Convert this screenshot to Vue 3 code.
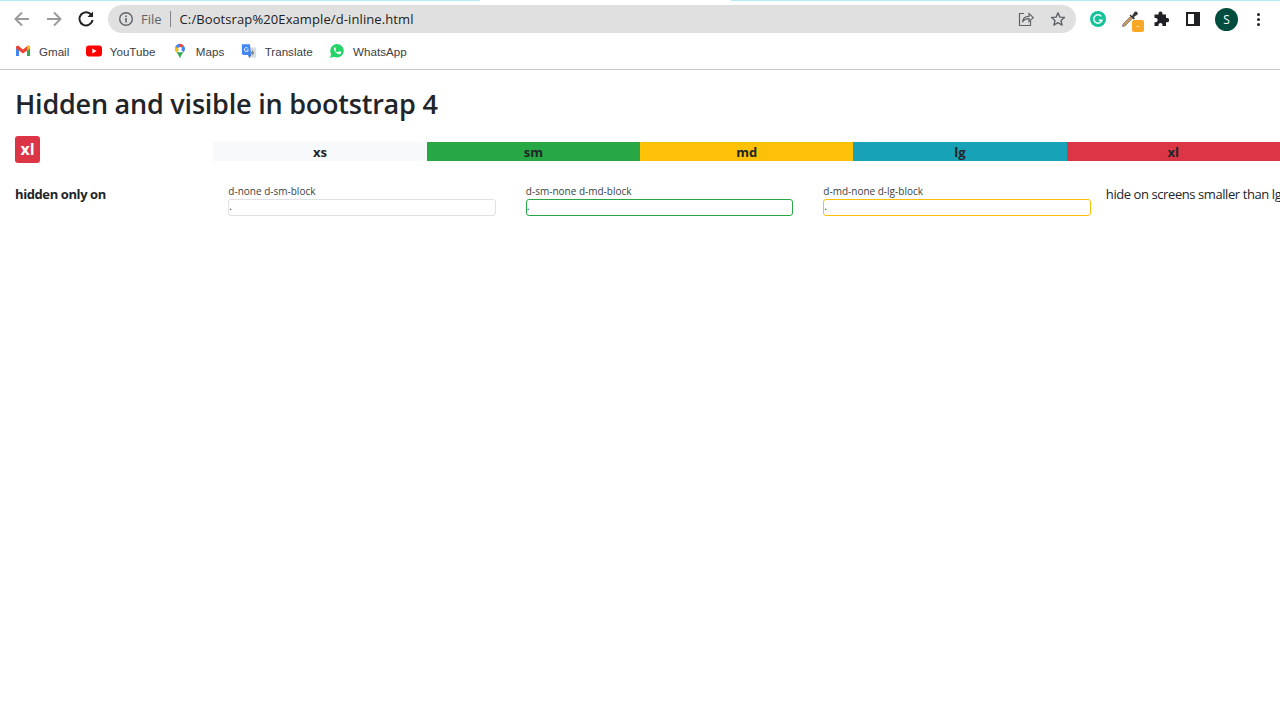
<script setup>
const marcadores = [
  { nombre: 'Gmail', icono: 'gmail' },
  { nombre: 'YouTube', icono: 'youtube' },
  { nombre: 'Maps', icono: 'maps' },
  { nombre: 'Translate', icono: 'translate' },
  { nombre: 'WhatsApp', icono: 'whatsapp' }
]

const tamanos = [
  { txt: 'xs', clase: 'bg-light' },
  { txt: 'sm', clase: 'bg-success' },
  { txt: 'md', clase: 'bg-warning' },
  { txt: 'lg', clase: 'bg-info' },
  { txt: 'xl', clase: 'bg-danger' }
]

const cajas = [
  { txt: 'd-none d-sm-block', clase: 'borde-gris' },
  { txt: 'd-sm-none d-md-block', clase: 'borde-verde' },
  { txt: 'd-md-none d-lg-block', clase: 'borde-amarillo' }
]
</script>

<template>
  <div class="pagina">
    <header class="navegador">
      <div class="franja">
        <span class="franja-a"></span>
        <span class="franja-b"></span>
      </div>
      <div class="barra">
        <svg class="flecha" width="18" height="18" viewBox="0 0 18 18"><path d="M16 9H3M9 2.500 2.500 9 9 15.500" fill="none" stroke="#9b9b9b" stroke-width="2"/></svg>
        <svg class="flecha dos" width="18" height="18" viewBox="0 0 18 18"><path d="M2 9h13M9 2.500 15.500 9 9 15.500" fill="none" stroke="#9b9b9b" stroke-width="2"/></svg>
        <svg class="recargar" width="18" height="18" viewBox="0 0 18 18"><path d="M14.600 5.200A6.600 6.600 0 1 0 15.600 10" fill="none" stroke="#222" stroke-width="2"/><path d="M16 1.500V7h-5.500z" fill="#222"/></svg>
        <div class="url">
          <svg width="16" height="16" viewBox="0 0 16 16"><circle cx="8" cy="8" r="6.300" fill="none" stroke="#5f6368" stroke-width="1.400"/><path d="M7.200 7h1.600v4.600H7.200zM7.200 4.400h1.600V6H7.200z" fill="#5f6368"/></svg>
          <span class="file">File</span>
          <span class="sep"></span>
          <span class="direccion">C:/Bootsrap%20Example/d-inline.html</span>
          <svg class="compartir" width="16" height="16" viewBox="0 0 16 16"><path d="M6 2.500H1.500v12h11V10" fill="none" stroke="#5f6368" stroke-width="1.200"/><path d="M4.500 11c.4-3.600 3-5.600 6.500-5.600V2.600L15.300 6.600 11 10.500V7.600C8.400 7.600 6 8.600 4.500 11z" fill="#e0e0e0" stroke="#5f6368" stroke-width="1.200"/></svg>
          <svg class="estrella" width="16" height="16" viewBox="0 0 16 16"><path d="M8 1.800l1.900 4.300 4.600.4-3.500 3 1.100 4.600L8 11.700l-4.100 2.400L5 9.500l-3.500-3 4.600-.4z" fill="none" stroke="#5f6368" stroke-width="1.400" stroke-linejoin="round"/></svg>
        </div>
        <div class="extensiones">
          <span class="grammarly">
            <svg width="16" height="16" viewBox="0 0 16 16"><circle cx="8" cy="8" r="8" fill="#15c39a"/><path d="M11.300 5.400A4.200 4.200 0 1 0 12 9.200H8.800" fill="none" stroke="#fff" stroke-width="1.500"/></svg>
          </span>
          <span class="gotero">
            <svg width="18" height="18" viewBox="0 0 18 18"><path d="M1.500 16.500 2 14 9.500 6.500 11.500 8.500 4 16z" fill="#c99a5b" stroke="#8f8f8f" stroke-width="1"/><path d="M9.500 4.500 11 6l2.300-3.800a1.700 1.700 0 0 1 3 2.600L12.800 7l1.200 1.500-1.200 1L8.500 5.500z" fill="#37393c"/></svg>
            <span class="insignia">-</span>
          </span>
          <svg class="puzzle" width="16" height="16" viewBox="0 0 16 16"><path d="M5.500 2.500a2 2 0 0 1 4 0V3.500H13V7h1a2.100 2.100 0 0 1 0 4.300h-1V15H9.500v-1a2 2 0 0 0-4 0v1H1.500v-3.700h1a2.200 2.200 0 0 0 0-4.400h-1V3.500h4z" fill="#202124"/></svg>
          <span class="panel-lateral"></span>
          <span class="avatar">S</span>
          <span class="puntos"><i></i><i></i><i></i></span>
        </div>
      </div>
      <nav class="marcadores">
        <a v-for="m in marcadores" :key="m.nombre" class="marcador">
          <svg v-if="m.icono === 'gmail'" width="16" height="16" viewBox="0 0 16 16"><path d="M1 4v9h3V7z" fill="#4285f4"/><path d="M12 7v6h3V4z" fill="#34a853"/><path d="M1 3.500v2L8 10.500l7-5v-2L13 2.500 8 6.500 3 2.500z" fill="#ea4335"/><path d="M13 2.500l2 1v2l-3 2.200V4z" fill="#fbbc04"/></svg>
          <svg v-else-if="m.icono === 'youtube'" width="16" height="16" viewBox="0 0 16 16"><rect x="0" y="2.500" width="16" height="11" rx="3" fill="#f00"/><path d="M6.300 5.500v5L10.600 8z" fill="#fff"/></svg>
          <svg v-else-if="m.icono === 'maps'" width="16" height="16" viewBox="0 0 16 16"><path d="M8 .8a5 5 0 0 0-5 5c0 1.300.6 2.400 1.400 3.400L8 6z" fill="#4285f4"/><path d="M8 .8a5 5 0 0 1 3.600 1.600L8 6z" fill="#ea4335"/><path d="M3.500 3.400 8 6 4.400 9.200A5 5 0 0 1 3 5.800a5 5 0 0 1 .5-2.400z" fill="#fbbc04"/><path d="M11.600 2.400A5 5 0 0 1 13 5.800c0 1.300-.6 2.300-1.400 3.400L8 6z" fill="#4285f4"/><path d="M4.400 9.200 11.600 9.200C10 11 8.800 12.800 8 15.400 7.400 13 6 11 4.400 9.200z" fill="#34a853"/><circle cx="8" cy="5.800" r="1.800" fill="#fff"/></svg>
          <svg v-else-if="m.icono === 'translate'" width="16" height="16" viewBox="0 0 18 18"><path d="M9 5h8v11.500H8z" fill="#dadce0"/><path d="M13 7.500l.9 2.500h1l-1.400 3.600h-1L11 10h1z" fill="#80868b"/><path d="M1 1.500h9l1.500 12H3a2 2 0 0 1-2-2z" fill="#4285f4"/><path d="M8 13.500h3.500L9.500 16.500z" fill="#3367d6"/><path d="M8 6.200A2.300 2.300 0 1 0 8.300 8H6.200" fill="none" stroke="#fff" stroke-width="1"/></svg>
          <svg v-else width="16" height="16" viewBox="0 0 16 16"><circle cx="8" cy="7.800" r="6.800" fill="#25d366"/><path d="M1 15l1.200-4.300 3 3z" fill="#25d366"/><path d="M5.800 4.200c-.9.700-1.200 1.700-.6 3 .8 1.800 2 3 3.800 3.800 1.300.5 2.300.2 3-.7l.2-1.200-1.900-1-.9 1C8 9.600 6.800 8.400 6.300 7.200l.8-.9-.9-2z" fill="#fff"/></svg>
          <span>{{ m.nombre }}</span>
        </a>
      </nav>
    </header>

    <main class="contenido">
      <h1>Hidden and visible in bootstrap 4</h1>

      <div class="fila-tamanos">
        <div class="col-badge"><span class="badge">xl</span></div>
        <div v-for="t in tamanos" :key="t.txt" class="tamano" :class="t.clase">{{ t.txt }}</div>
      </div>

      <div class="fila-cajas">
        <strong class="col-titulo">hidden only on</strong>
        <div class="cajas">
          <div v-for="c in cajas" :key="c.txt" class="caja">
            <small>{{ c.txt }}</small>
            <div class="borde" :class="c.clase">.</div>
          </div>
        </div>
        <p class="nota">hide on screens smaller than lg</p>
      </div>
    </main>
  </div>
</template>

<style scoped>
* {
  box-sizing: border-box;
}

.pagina {
  width: 1280px;
  height: 727px;
  overflow: hidden;
  background: #fff;
  color: #212529;
  font-family: "Open Sans", "Noto Sans", sans-serif;
}

.navegador {
  height: 70px;
  border-bottom: 1px solid #c8c8c8;
  position: relative;
}

.franja {
  position: absolute;
  top: 0;
  left: 0;
  right: 0;
  height: 1px;
}

.franja-a,
.franja-b {
  position: absolute;
  top: 0;
  height: 1px;
  background: #b3ecf5;
}

.franja-a {
  left: 0;
  width: 480px;
}

.franja-b {
  left: 731px;
  right: 0;
}

.barra {
  height: 38px;
  display: flex;
  align-items: center;
  padding-left: 13px;
}

.flecha.dos {
  margin-left: 14px;
}

.recargar {
  margin-left: 14px;
}

.url {
  margin-left: 13px;
  width: 968px;
  height: 28px;
  background: #e0e0e0;
  border-radius: 14px;
  display: flex;
  align-items: center;
  padding-left: 10px;
  padding-right: 10px;
  font-size: 13px;
}

.file {
  margin-left: 7px;
  color: #5f6368;
}

.sep {
  width: 1px;
  height: 16px;
  background: #80868b;
  margin: 0 9px 0 8px;
}

.direccion {
  color: #202124;
  flex: 1;
  letter-spacing: 0.1px;
}

.compartir {
  margin-right: 16px;
}

.extensiones {
  display: flex;
  align-items: center;
  position: relative;
  flex: 1;
}

.grammarly {
  display: flex;
  margin-left: 14px;
}

.gotero {
  position: relative;
  display: flex;
  margin-left: 15px;
}

.insignia {
  position: absolute;
  left: 11px;
  top: 10px;
  width: 12px;
  height: 12px;
  background: #f9a825;
  border-radius: 2px;
  color: #fff;
  font-size: 9px;
  line-height: 11px;
  text-align: center;
}

.puzzle {
  margin-left: 14px;
}

.panel-lateral {
  width: 14px;
  height: 14px;
  margin-left: 17px;
  border: 2px solid #202124;
  border-right-width: 6px;
}

.avatar {
  width: 23px;
  height: 23px;
  margin-left: 15px;
  border-radius: 50%;
  background: #004d40;
  color: #fff;
  font-size: 12px;
  text-align: center;
  line-height: 23px;
}

.puntos {
  display: flex;
  flex-direction: column;
  gap: 2px;
  margin-left: 19px;
}

.puntos i {
  width: 3px;
  height: 3px;
  border-radius: 50%;
  background: #202124;
}

.marcadores {
  height: 31px;
  display: flex;
  align-items: center;
  padding-left: 15px;
  padding-bottom: 5px;
  font-family: "Liberation Sans", Arial, sans-serif;
  font-size: 11.6px;
  color: #3c4043;
}

.marcador {
  display: flex;
  align-items: center;
  gap: 8px;
  margin-right: 16.5px;
}

.contenido {
  padding-top: 15px;
}

h1 {
  margin: 0 0 0 15px;
  font-size: 27px;
  line-height: 37px;
  font-weight: 600;
  letter-spacing: -0.22px;
}

.fila-tamanos {
  display: grid;
  grid-template-columns: repeat(6, 213.33px);
  margin-top: 14px;
  align-items: start;
}

.col-badge {
  padding-left: 15px;
  height: 26px;
}

.badge {
  display: block;
  width: 25px;
  height: 27px;
  border-radius: 3px;
  background: #dc3545;
  color: #fff;
  font-weight: 700;
  font-size: 16px;
  line-height: 27px;
  text-align: center;
}

.tamano {
  margin-top: 6px;
  height: 19px;
  line-height: 20px;
  font-size: 13px;
  font-weight: 700;
  text-align: center;
}

.bg-light {
  background: #f8f9fa;
}

.bg-success {
  background: #28a745;
}

.bg-warning {
  background: #ffc107;
}

.bg-info {
  background: #17a2b8;
}

.bg-danger {
  background: #dc3545;
}

.fila-cajas {
  display: flex;
  margin-top: 22px;
  align-items: flex-start;
}

.col-titulo {
  flex: none;
  width: 213.33px;
  padding-left: 15px;
  font-size: 13px;
  line-height: 20px;
  letter-spacing: -0.4px;
}

.cajas {
  display: flex;
  width: 892.5px;
  flex: none;
}

.caja {
  width: 297.5px;
  padding: 0 15px;
}

small {
  display: block;
  font-size: 10px;
  line-height: 15px;
  color: #3a3f44;
}

.borde {
  height: 17px;
  border: 1px solid #dee2e6;
  border-radius: 3px;
  font-size: 10px;
  line-height: 13px;
}

.borde-verde {
  border-color: #28a745;
}

.borde-amarillo {
  border-color: #ffc107;
}

.nota {
  margin: 0;
  flex: none;
  font-size: 13px;
  line-height: 20px;
  letter-spacing: -0.42px;
  white-space: nowrap;
}
</style>

<style>
html,
body {
  overflow: hidden;
}
</style>
